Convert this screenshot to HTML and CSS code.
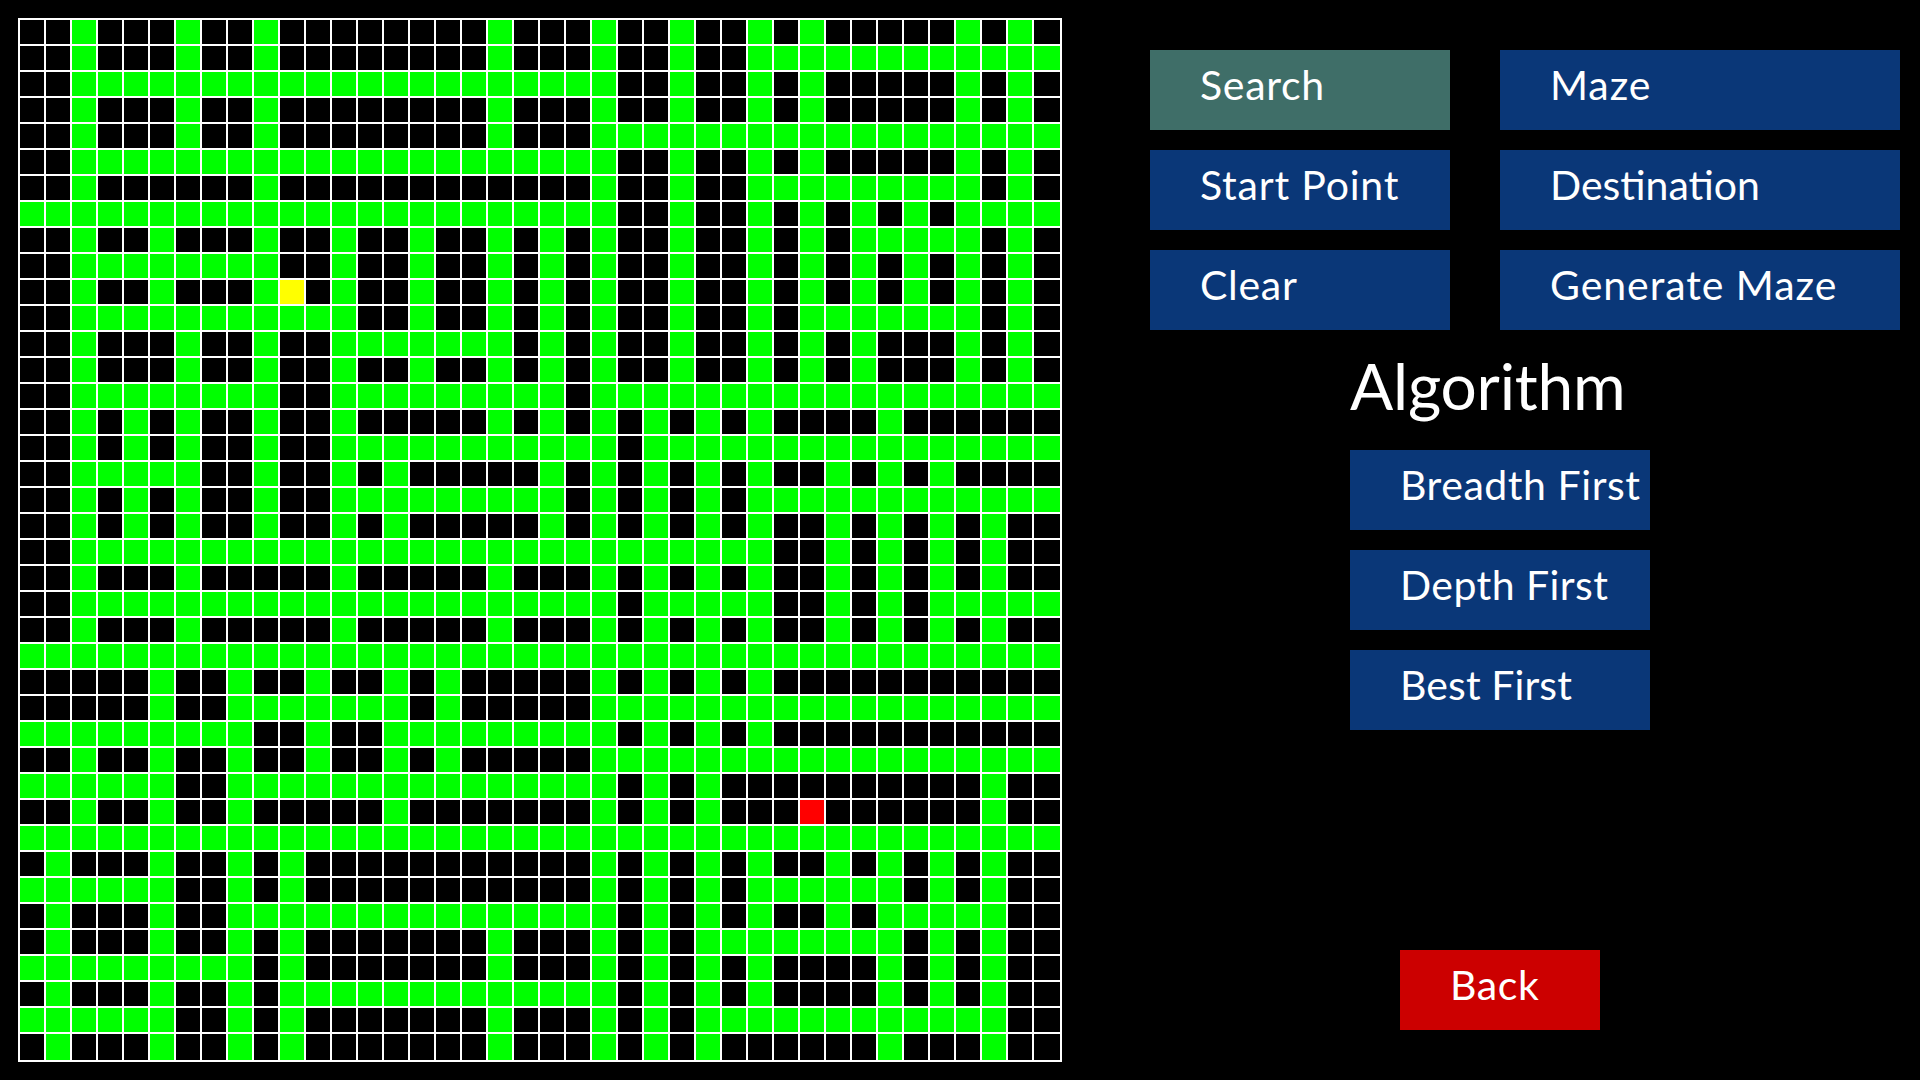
FILE: index.html
```html
<!DOCTYPE html>
<html lang="en">
<head>
<meta charset="utf-8">
<title>Pathfinding Visualizer</title>
<link rel="stylesheet" href="styles.css">
</head>
<body>
<main class="app">
  <div class="grid" id="grid"></div>
  <section class="panel">
    <div class="controls">
      <button class="btn btn-active ls-search">Search</button>
      <button class="btn ls-maze">Maze</button>
      <button class="btn ls-start">Start Point</button>
      <button class="btn ls-dest">Destination</button>
      <button class="btn ls-clear">Clear</button>
      <button class="btn ls-gen">Generate Maze</button>
    </div>
    <div class="algorithms">
      <h1 class="title">Algorithm</h1>
      <button class="btn ls-breadth">Breadth First</button>
      <button class="btn ls-depth">Depth First</button>
      <button class="btn ls-best">Best First</button>
      <button class="btn btn-back ls-back">Back</button>
    </div>
  </section>
</main>
<script src="script.js"></script>
</body>
</html>
```
FILE: styles.css
```css
* { box-sizing: border-box; }
html, body { margin: 0; height: 100%; background: #000; }
body { font-family: "Lato", "Liberation Sans", sans-serif; color: #fff; }
.app { display: flex; padding: 18px; height: 1080px; }
.grid {
  display: grid;
  flex: none;
  width: 1044px;
  height: 1044px;
  padding: 2px;
  gap: 2px;
  background: #fff;
  grid-template-columns: repeat(39, 24px) 26px;
  grid-template-rows: repeat(39, 24px) 26px;
}
.cell { background: #000; }
.cell.path { background: #0f0; }
.cell.start { background: #ff0; }
.cell.end { background: #f00; }
.panel { margin-left: 88px; padding-top: 32px; width: 750px; }
.controls {
  display: grid;
  grid-template-columns: 300px 400px;
  column-gap: 50px;
  row-gap: 20px;
}
.algorithms {
  display: flex;
  flex-direction: column;
  gap: 20px;
  width: 300px;
  margin-left: 200px;
}
.title {
  margin: 0;
  height: 100px;
  padding-top: 21px;
  font-size: 64px;
  line-height: 70px;
  font-weight: 400;
  letter-spacing: -0.2px;
}
.btn {
  display: block;
  height: 80px;
  padding: 0 0 10px 50px;
  border: 0;
  background: #0a3778;
  color: #fff;
  font-family: inherit;
  font-size: 41px;
  font-weight: 400;
  line-height: 70px;
  text-align: left;
  white-space: nowrap;
  overflow: hidden;
}
.btn-active { background: #3f6e68; }
.btn-back {
  width: 200px;
  align-self: center;
  margin-top: 200px;
  background: #c00;
}
.ls-search { letter-spacing: 0.7px; }
.ls-maze { letter-spacing: 0.9px; }
.ls-start { letter-spacing: 0.8px; }
.ls-clear { letter-spacing: 0.7px; }
.ls-gen { letter-spacing: 0.95px; }
.ls-breadth { letter-spacing: 0.55px; }
.ls-depth { letter-spacing: 0.45px; }
.ls-best { letter-spacing: 0.1px; }
.ls-back { letter-spacing: 0.6px; }
```
FILE: script.js
```js
var ROWS = [
  "2,6,9,18,22,25,28,30,36,38",
  "2,6,9,18,22,25,28-39",
  "2-22,25,28,30,36,38",
  "2,6,9,18,22,25,28,30,36,38",
  "2,6,9,18,22-39",
  "2-22,25,28,30,36,38",
  "2,9,22,25,28-36,38",
  "0-22,25,28,30,32,34,36-39",
  "2,5,9,12,15,18,20,22,25,28,30,32-36,38",
  "2-9,12,15,18,20,22,25,28,30,32,34,36,38",
  "2,5,9,12,15,18,20,22,25,28,30,32,34,36,38",
  "2-12,15,18,20,22,25,28,30-36,38",
  "2,6,9,12-18,20,22,25,28,30,32,36,38",
  "2,6,9,12,15,18,20,22,25,28,30,32,36,38",
  "2-9,12-20,22-39",
  "2,4,6,9,12,18,20,22,24,26,28,33",
  "2,4,6,9,12-22,24-39",
  "2-6,9,12,14,20,22,24,26,28,31,33,35",
  "2,4,6,9,12-20,22,24,26,28-39",
  "2,4,6,9,12,14,20,22,24,26,28,31,33,35,37",
  "2-28,31,33,35,37",
  "2,6,12,18,22,24,26,28,31,33,35,37",
  "2-22,24-28,31,33,35-39",
  "2,6,12,18,22,24,26,28,31,33,35,37",
  "0-39",
  "5,8,11,14,16,22,24,26,28",
  "5,8-14,16,22-39",
  "0-8,11,14-22,24,26,28",
  "2,5,8,11,14,16,22-39",
  "0-5,8-22,24,26,37",
  "2,5,8,14,22,24,26,37",
  "0-39",
  "1,5,8,10,22,24,26,28,31,33,35,37",
  "0-5,8,10,22,24,26,28-33,35,37",
  "1,5,8-22,24,26,28,31,33-37",
  "1,5,8,10,18,22,24,26-33,35,37",
  "0-8,10,18,22,24,26,28,33,35,37",
  "1,5,8,10-22,24,26,28,33,35,37",
  "0-5,8,10,18,22,24,26-37",
  "1,5,8,10,18,22,24,26,33,37"
];
var grid = document.getElementById("grid");
ROWS.forEach(function (spec, r) {
  var on = {};
  spec.split(",").forEach(function (part) {
    var b = part.split("-");
    var from = +b[0], to = +(b[1] || b[0]);
    for (var c = from; c <= to; c++) on[c] = true;
  });
  for (var c = 0; c < 40; c++) {
    var d = document.createElement("div");
    d.className = "cell";
    if (on[c]) d.className += " path";
    if (r === 10 && c === 10) d.className += " start";
    if (r === 30 && c === 30) d.className += " end";
    grid.appendChild(d);
  }
});
```
